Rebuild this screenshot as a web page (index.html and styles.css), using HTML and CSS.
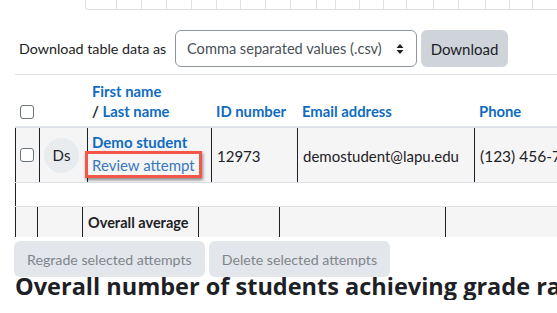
FILE: index.html
```html
<!DOCTYPE html>
<html lang="en">
<head>
    <meta charset="UTF-8">
    <meta name="viewport" content="width=device-width, initial-scale=1.0">
    <title>Quiz results</title>
    <link rel="stylesheet" href="styles.css">
</head>
<body>
    <div class="chart-edge">
        <span style="width:30px"></span><span style="width:24px"></span><span style="width:24px"></span>
        <span style="width:24px"></span><span style="width:24px"></span><span style="width:23px"></span>
        <span style="width:24px"></span><span style="width:24px"></span><span style="width:25px"></span>
        <span style="width:18px"></span><span style="width:23px"></span><span style="width:23px"></span>
        <span style="width:22px"></span><span style="width:26px"></span><span style="width:24px"></span>
        <span style="width:26px"></span><span style="width:23px"></span><span style="width:22px"></span>
        <span style="width:26px"></span><span style="width:26px"></span>
    </div>

    <form class="download-row">
        <label for="format">Download table data as</label>
        <div class="select-wrap">
            <select id="format">
                <option>Comma separated values (.csv)</option>
            </select>
            <svg class="caret" width="8" height="12" viewBox="0 0 8 12"><path d="M4 1 L7.5 5 H0.5 Z M4 11 L7.5 7 H0.5 Z" fill="#1d2125"/></svg>
        </div>
        <button type="button" class="btn-secondary">Download</button>
    </form>

    <div class="results">
        <div class="row head">
            <div class="cell c-check"><span class="checkbox"></span></div>
            <div class="cell c-pic"></div>
            <div class="cell c-name"><a href="#">First name</a><br>/ <a href="#">Last name</a></div>
            <div class="cell c-id"><a href="#">ID number</a></div>
            <div class="cell c-email"><a href="#">Email address</a></div>
            <div class="cell c-phone"><a href="#">Phone</a></div>
        </div>

        <div class="row body">
            <div class="cell c-check"><span class="checkbox"></span></div>
            <div class="cell c-pic"><span class="avatar">Ds</span></div>
            <div class="cell c-name">
                <a href="#" class="student">Demo student</a>
                <a href="#" class="review">Review attempt</a>
            </div>
            <div class="cell c-id">12973</div>
            <div class="cell c-email">demostudent@lapu.edu</div>
            <div class="cell c-phone">(123) 456-78</div>
        </div>

        <div class="row spacer">
            <div class="cell"></div>
        </div>

        <div class="row foot">
            <div class="cell f-check"></div>
            <div class="cell f-pic"></div>
            <div class="cell f-name">Overall average</div>
            <div class="cell f-id"></div>
            <div class="cell f-email"></div>
            <div class="cell f-phone"></div>
        </div>
    </div>

    <div class="actions">
        <button type="button" disabled>Regrade selected attempts</button>
        <button type="button" disabled>Delete selected attempts</button>
    </div>

    <h2>Overall number of students achieving grade ra</h2>
</body>
</html>
```

FILE: styles.css
```css
body {
    margin: 0;
    font-family: Lato, "Liberation Sans", sans-serif;
    font-size: 15px;
    color: #1d2125;
    background: #fff;
    overflow: hidden;
}
a {
    color: #0f6cbf;
    text-decoration: none;
}
.chart-edge {
    display: flex;
    margin-left: 85px;
    height: 9px;
    border-left: 1px solid #dee2e6;
    border-bottom: 1px solid #dee2e6;
    border-bottom-left-radius: 3px;
    white-space: nowrap;
}
.chart-edge span {
    flex: none;
    border-right: 1px solid #dee2e6;
}
.download-row {
    display: flex;
    align-items: center;
    margin: 20px 0 0 15px;
    padding: 0 0 7px 4px;
    border-bottom: 1px solid #dee2e6;
}
.download-row label {
    width: 156px;
    font-size: 14.3px;
}
.select-wrap {
    position: relative;
    width: 242px;
    height: 37px;
}
select {
    appearance: none;
    width: 100%;
    height: 100%;
    padding: 0 30px 0 11px;
    border: 1px solid #8f959e;
    border-radius: 6px;
    background: #fff;
    font: inherit;
    font-size: 14.6px;
    color: #495057;
}
.caret {
    position: absolute;
    right: 13px;
    top: 13px;
    pointer-events: none;
}
.btn-secondary {
    margin-left: 4px;
    width: 87px;
    height: 37px;
    border: none;
    border-radius: 6px;
    background: #ced4da;
    font: inherit;
    color: #1d2125;
}
.results {
    margin-left: 15px;
}
.row {
    display: flex;
}
.cell {
    flex: none;
    box-sizing: border-box;
    padding: 0 5px;
}
.c-check { width: 24px; }
.c-pic { width: 48px; }
.c-name { width: 124px; }
.c-id { width: 86px; }
.c-email { width: 177px; }
.c-phone { width: 100px; white-space: nowrap; }
.head {
    height: 51px;
    align-items: flex-end;
    border-bottom: 2px solid #dee2e6;
    font-weight: bold;
    font-size: 14.8px;
    line-height: 20px;
}
.head .cell {
    padding-bottom: 5px;
}
.head .c-check {
    padding-bottom: 7px;
}
.checkbox {
    display: block;
    width: 12px;
    height: 12px;
    border: 1px solid #6a737b;
    border-radius: 3px;
    background: #fff;
}
.body {
    height: 54px;
    background: #f5f5f5;
    border-bottom: 1px solid #dee2e6;
    align-items: stretch;
}
.body .cell {
    display: flex;
    flex-direction: column;
    justify-content: center;
    border-left: 1px solid #1d2125;
}
.body .c-check {
    padding-left: 4px;
}
.body .c-pic {
    padding-left: 4px;
}
.body .c-phone {
    font-size: 15.5px;
}
.avatar {
    display: flex;
    align-items: center;
    justify-content: center;
    width: 35px;
    height: 35px;
    border-radius: 50%;
    background: #e9ecef;
    font-size: 15px;
}
.body .c-name {
    padding-top: 6px;
    justify-content: flex-start;
    line-height: 17px;
}
.student {
    font-weight: bold;
    margin-left: -1px;
}
.review {
    align-self: flex-start;
    margin-left: -8px;
    padding: 1px 4px 0 4px;
    border: 3px solid #f4574a;
    box-shadow: 1px 2px 3px rgba(0, 0, 0, 0.45);
    color: #3a78c0;
    background: #f5f5f5;
    line-height: 20px;
}
.body .c-id,
.body .c-email,
.body .c-phone {
    padding-top: 1px;
}
.spacer {
    height: 23px;
    border-bottom: 1px solid #dee2e6;
}
.spacer .cell {
    border-left: 1px solid #1d2125;
}
.foot {
    height: 30px;
    background: #f5f5f5;
    font-weight: bold;
    font-size: 14.5px;
    align-items: center;
}
.foot .cell {
    height: 100%;
    display: flex;
    align-items: center;
    border-left: 1px solid #1d2125;
}
.f-check { width: 22px; }
.f-pic { width: 45px; }
.f-name { width: 116px; }
.f-id { width: 81px; }
.f-email { width: 166px; }
.f-phone { width: 120px; }
.actions {
    display: flex;
    gap: 4px;
    margin: 4px 0 0 14px;
}
.actions button {
    height: 36px;
    padding: 0 13px;
    border: none;
    border-radius: 6px;
    background: #e3e6ea;
    color: #7e858c;
    font: inherit;
    font-size: 14.2px;
}
h2 {
    margin: -5px 0 0 15px;
    font-family: "Open Sans", Lato, sans-serif;
    font-size: 23.5px;
    line-height: 28px;
    font-weight: bold;
    white-space: nowrap;
}
```
